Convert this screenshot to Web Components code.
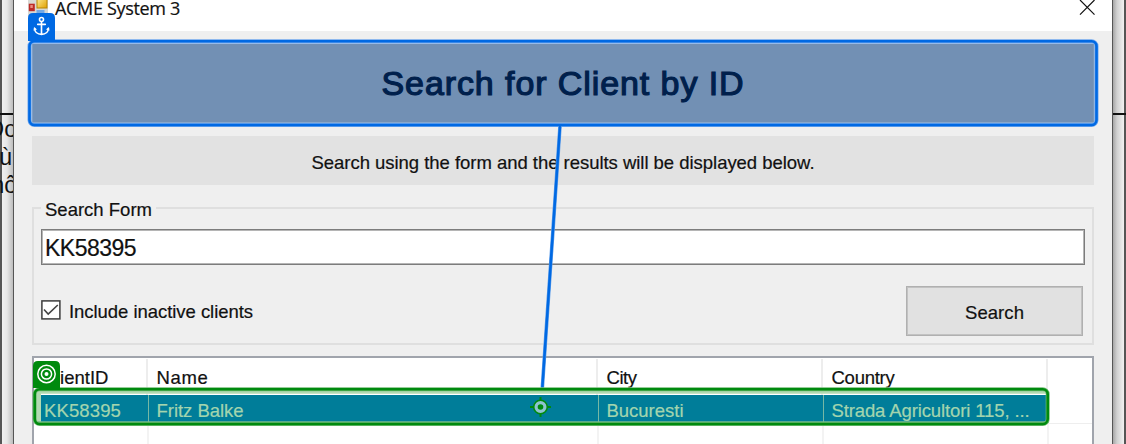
<!DOCTYPE html>
<html lang="en"><head><meta charset="utf-8"><title>ACME System 3</title>
<style>
html,body{margin:0;height:100%;overflow:hidden}
body{font-family:"Liberation Sans",Arial,sans-serif;color:#111;background:#eee}
</style></head><body>
<client-search-screen></client-search-screen>
<script>
const define=(name,html,init)=>customElements.define(name,class extends HTMLElement{
  connectedCallback(){
    if(this.shadowRoot)return;
    const t=document.createElement('template');t.innerHTML=html;
    this.attachShadow({mode:'open'}).append(t.content.cloneNode(true));
    if(init)init(this);
  }
});

/* A one-line label whose tracking is set so that it spans the width given in pixels. */
define('fit-label',`<style>
:host{display:inline-block;white-space:pre;line-height:1.2}
span{display:inline-block}
</style><span><slot></slot></span>`,el=>{
  const s=el.shadowRoot.querySelector('span'),n=el.textContent.length;
  const w=s.getBoundingClientRect().width,target=+el.getAttribute('span');
  if(target)s.style.letterSpacing=((target-w)/n).toFixed(3)+'px';
});

define('desktop-edge',`<style>
:host{display:block;width:13px;height:444px;overflow:hidden;background:linear-gradient(90deg,#555 0 2px,#f0f0f0 2px,#e6e6e6 7px,#bdbdbd 13px);border-right:1px solid #555;font-size:23px;color:#111}
:host([side=right]){background:linear-gradient(90deg,#a6a6a6 0,#d0d0d0 4px,#ededed 10px,#f0f0f0 11px,#555 11px);border:0;border-left:1px solid #555}
.rule{margin-top:113px;height:2px;background:#111}
.lines{display:flex;flex-direction:column;align-items:flex-end;margin-right:-4px;line-height:28px;white-space:nowrap}
::slotted(.in){margin-right:5px}
</style><div class="rule"></div><div class="lines"><slot></slot></div>`);

define('app-icon',`<style>:host{display:block;width:20px;height:17px}svg{display:block}</style>
<svg width="20" height="17" viewBox="0 0 20 17">
<defs><linearGradient id="y" x1="0" y1="0" x2="1" y2="1"><stop stop-color="#fff09a"/><stop offset="1" stop-color="#e0a000"/></linearGradient></defs>
<rect width="20" height="17" fill="#d8d8d4"/><rect x=".8" y="3.7" width="6" height="7.5" fill="#bd2a26"/><rect x="2.3" y="5" width="2.5" height="3" fill="#e98b7e"/>
<rect x="9" y="-3" width="10" height="11" fill="url(#y)" stroke="#b98500"/><rect x="8.5" y="10" width="8" height="6" fill="#74a9e6"/></svg>`);

define('title-bar',`<style>
:host{display:flex;height:31px;background:#fff;font:18px "Open Sans","Noto Sans",sans-serif;color:#111}
app-icon{margin-left:14px}.t{margin:-4px 0 0 7px}.x{margin:0 16px 0 auto}svg{display:block}
</style><app-icon></app-icon><div class="t"><slot></slot></div>
<svg class="x" width="17" height="17" viewBox="0 0 17 17"><path d="M1 0 15.5 14.7M15.5 0 1 14.7" stroke="#111" stroke-width="1.2"/></svg>`);

define('page-banner',`<style>
:host{display:flex;height:83px;align-items:center;justify-content:center;background:#7290b4;color:#00204c;font-size:34px;-webkit-text-stroke:1.2px #00204c;padding-bottom:1px;box-sizing:border-box}
</style><slot></slot>`);
define('info-strip',`<style>
:host{display:flex;height:49px;margin-top:11px;box-sizing:border-box;padding-top:6px;align-items:center;justify-content:center;background:#e2e2e2;font-size:18.5px}
</style><slot></slot>`);

define('check-option',`<style>:host{display:flex;align-items:center;gap:8px;font-size:18.5px}svg{display:block;margin-top:-3px}::slotted(*){margin-top:2px}</style>
<svg width="20" height="20" viewBox="0 0 20 20"><rect x=".9" y=".9" width="18" height="18" fill="#fff" stroke="#3c3c3c" stroke-width="1.5"/><path d="M3 9.5 7.2 14 16.8 5" fill="none" stroke="#444" stroke-width="1.6"/></svg><slot></slot>`);
define('push-button',`<style>:host{display:flex;box-sizing:border-box;width:177px;height:50px;padding-top:5px;border:1px solid #b0b0b0;box-shadow:inset 0 0 0 1px #c2c2c2;background:#e1e1e1;align-items:center;justify-content:center;font-size:18.5px}</style><slot></slot>`);
define('text-field',`<style>:host{display:flex;box-sizing:border-box;width:1044px;height:36px;border:1px solid #7c7c7c;box-shadow:inset 0 0 0 1px #b5b5b5;background:#fff;align-items:center;padding:3px 0 0 3px;font-size:23px}</style><slot></slot>`);
define('group-box',`<style>
:host{display:block;box-sizing:border-box;height:138px;margin-top:22px;border:2px solid #dfdfdf;padding:0 7px;font-size:18.5px}
.legend{display:block;width:max-content;height:21px;margin:-12px 0 0 0;padding:2px 4px 0;background:#efefef;box-sizing:border-box;line-height:20px}
.field{margin-top:11px}.actions{display:flex;justify-content:space-between;align-items:center;margin-top:21px;padding-right:2px}
</style><div class="legend"><slot name="legend"></slot></div><div class="field"><slot name="field"></slot></div><div class="actions"><slot name="option"></slot><slot name="action"></slot></div>`);

define('client-table',`<style>
:host{display:block;height:88px;box-sizing:border-box;margin-top:11px;border:2px solid #a0a4ac;border-bottom:0;background:#fff;font-size:18.5px;overflow:hidden}
.row{display:grid;grid-template-columns:114px 450px 225px 225px 1fr}
.row>*{box-sizing:border-box;padding-left:8.5px;white-space:nowrap;overflow:hidden}
.head{height:37px;padding-top:1px;box-sizing:border-box}.head>*{padding-top:8px;border-right:2px solid #ededed}
.sel{height:28px;border-bottom:1px solid #eee}.sel>*{background:#007d99;color:#a3d5ae;border-right:1px solid #76b8a4;padding-top:5px}
.sel>:first-child{margin-left:7px;padding-left:3px;width:108px}.sel>:not(:first-child){margin-left:1px;padding-left:7.5px;width:100%}.sel>:last-child{background:#fff}
.blank{height:24px}.blank>*{border-right:2px solid #f3f3f3;position:relative;left:1px}
.row>:last-child{border-right:0}
</style>
<div class="row head"><div><fit-label span="66">ClientID</fit-label></div><div><fit-label span="52">Name</fit-label></div><div><fit-label span="30">City</fit-label></div><div><fit-label span="63">Country</fit-label></div><div></div></div>
<div class="row sel"><div><fit-label span="77">KK58395</fit-label></div><div><fit-label span="87">Fritz Balke</fit-label></div><div><fit-label span="77">Bucuresti</fit-label></div><div><fit-label span="198">Strada Agricultori 115, ...</fit-label></div><div></div></div>
<div class="row blank"><div></div><div></div><div></div><div></div><div></div></div>`);

define('app-window',`<style>
:host{display:block;width:1098px;height:444px;background:#efefef;-webkit-text-stroke:.2px}
main{padding:11px 18px 0}
</style><slot name="title"></slot><main><slot></slot></main>`);

/* Anchor and target markers, drawn over the window they annotate. */
define('selection-overlay',`<style>
:host{position:absolute;inset:0;pointer-events:none}svg{display:block}
</style><svg width="1126" height="444" viewBox="0 0 1126 444">
<rect x="31" y="42.2" width="1063" height="1.8" fill="#a3c2e8"/><path d="M32 44V123M31 122.7H1094M1094.2 44V123" stroke="#8faed2" fill="none"/>
<rect x="29.5" y="41.3" width="1067" height="83.7" rx="5" fill="none" stroke="#70a8ee" stroke-width="4"/>
<rect x="29.5" y="41.3" width="1067" height="83.7" rx="5" fill="none" stroke="#0069e3" stroke-width="2.6"/>
<path d="M28 45V18q0-5 5-5H50q5 0 5 5V41H28Z" fill="#0069e3"/>
<g fill="none" stroke="#fff" stroke-width="1.6" stroke-linecap="round" stroke-linejoin="round"><circle cx="41.5" cy="19.5" r="2"/><path d="M41.5 22V34M37.7 24.4H45.3M34.5 28.3Q35 34.3 41.5 34.4 48 34.3 48.5 28.3"/></g><path d="M33.3 30.4 34.5 27.3 37 29.5ZM49.7 30.4 48.5 27.3 46 29.5Z" fill="#fff"/>
<path d="M560 126 542.3 388" stroke="#5e9eea" stroke-width="3.6"/><path d="M560 126 542.3 388" stroke="#0069e3" stroke-width="2.5"/>
<path d="M36 390H1047V393.8H41V422H36Z" fill="#b2dab2"/><path d="M37 421.8H1047" stroke="#7abd8c" stroke-width="1.2"/>
<rect x="34.7" y="389.2" width="1013" height="34.8" rx="5" fill="none" stroke="#75bd78" stroke-width="4"/>
<rect x="34.7" y="389.2" width="1013" height="34.8" rx="5" fill="none" stroke="#008a0e" stroke-width="2.6"/>
<path d="M33 393V366q0-5 5-5H55q5 0 5 5V388H33Z" fill="#008a0e"/>
<g fill="none" stroke="#fff" stroke-width="1.5"><circle cx="46.5" cy="374" r="8.7"/><circle cx="46.5" cy="374" r="5.1"/></g><circle cx="46.5" cy="374" r="2" fill="#fff"/>
<path d="M540.5 397V417M530 407H551" stroke="#008a0e" stroke-width="2"/><circle cx="540.5" cy="407" r="6.8" fill="#8fc4d0" stroke="#008a0e" stroke-width="1.6"/><circle cx="540.5" cy="407" r="2.8" fill="#008a0e"/>
</svg>`);

define('client-search-screen',`<style>
:host{display:flex;position:relative;width:1126px;height:444px;overflow:hidden}
</style>
<desktop-edge><span>Do</span><span class="in">ù</span><span>hố</span></desktop-edge>
<app-window><title-bar slot="title"><fit-label span="125">ACME System 3</fit-label></title-bar>
<page-banner><fit-label span="363">Search for Client by ID</fit-label></page-banner>
<info-strip><fit-label span="503">Search using the form and the results will be displayed below.</fit-label></info-strip>
<group-box><fit-label slot="legend" span="107">Search Form</fit-label><text-field slot="field"><fit-label span="91">KK58395</fit-label></text-field>
<check-option slot="option"><fit-label span="184">Include inactive clients</fit-label></check-option><push-button slot="action"><fit-label span="59">Search</fit-label></push-button></group-box>
<client-table></client-table></app-window>
<desktop-edge side="right"></desktop-edge>
<selection-overlay></selection-overlay>`);
</script></body></html>
